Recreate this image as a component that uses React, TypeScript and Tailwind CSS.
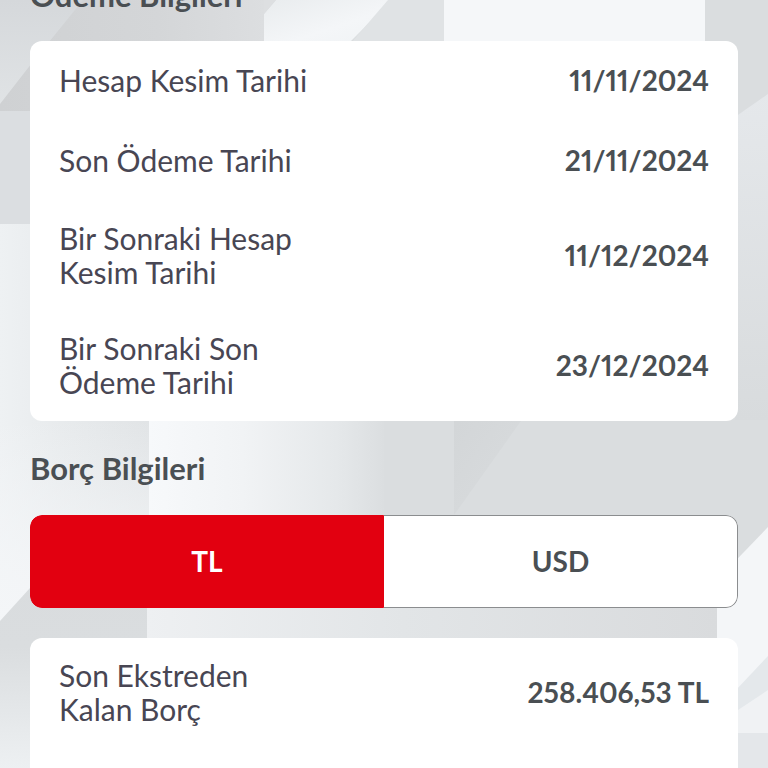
import { useState } from "react";
import clsx from "clsx";

type Row = { label: string; value: string };

const paymentRows: Row[] = [
  { label: "Hesap Kesim Tarihi", value: "11/11/2024" },
  { label: "Son Ödeme Tarihi", value: "21/11/2024" },
  { label: "Bir Sonraki Hesap Kesim Tarihi", value: "11/12/2024" },
  { label: "Bir Sonraki Son Ödeme Tarihi", value: "23/12/2024" },
];

const debtRows: Record<string, Row[]> = {
  TL: [{ label: "Son Ekstreden Kalan Borç", value: "258.406,53 TL" }],
  USD: [{ label: "Son Ekstreden Kalan Borç", value: "0,00 USD" }],
};

function Backdrop() {
  return (
    <svg
      aria-hidden="true"
      viewBox="0 0 768 768"
      preserveAspectRatio="none"
      className="absolute inset-0 -z-10 h-full w-full"
    >
      <defs>
        <linearGradient id="shade" x1="0" x2="1" y1="0" y2="0">
          <stop offset="0" stopColor="#cfd1d3" />
          <stop offset="0.6" stopColor="#d4d6d8" />
          <stop offset="1" stopColor="#dcdee0" />
        </linearGradient>
        <linearGradient id="corner" x1="0" x2="0" y1="0" y2="1">
          <stop offset="0" stopColor="#d5d8db" />
          <stop offset="1" stopColor="#e0e3e5" />
        </linearGradient>
        <linearGradient id="glow" x1="0" x2="1" y1="0" y2="1">
          <stop offset="0" stopColor="#e9ecee" />
          <stop offset="0.6" stopColor="#f4f6f8" />
          <stop offset="1" stopColor="#f0f3f5" />
        </linearGradient>
        <linearGradient id="left" x1="0" x2="1" y1="0" y2="0">
          <stop offset="0" stopColor="#eef1f3" />
          <stop offset="0.4" stopColor="#e8ebed" />
          <stop offset="1" stopColor="#e1e4e6" />
        </linearGradient>
        <linearGradient id="mist" x1="0" x2="0" y1="0" y2="1">
          <stop offset="0" stopColor="#f4f6f8" stopOpacity="0" />
          <stop offset="0.7" stopColor="#f4f6f8" stopOpacity="0.8" />
          <stop offset="1" stopColor="#f4f6f8" />
        </linearGradient>
        <linearGradient id="middle" x1="0" x2="1" y1="0" y2="0">
          <stop offset="0" stopColor="#f7f9fb" />
          <stop offset="0.4" stopColor="#f1f3f5" />
          <stop offset="0.8" stopColor="#e5e8ea" />
          <stop offset="1" stopColor="#dbdee0" />
        </linearGradient>
        <linearGradient id="band" x1="0" x2="1" y1="0" y2="0">
          <stop offset="0" stopColor="#eef0f2" />
          <stop offset="0.45" stopColor="#e2e5e7" />
          <stop offset="1" stopColor="#d9dbdd" />
        </linearGradient>
        <linearGradient id="bottom" x1="0" x2="0" y1="0" y2="1">
          <stop offset="0" stopColor="#d9dcde" />
          <stop offset="0.4" stopColor="#dadddf" />
          <stop offset="1" stopColor="#edf0f2" />
        </linearGradient>
        <linearGradient id="fold" x1="0" x2="1" y1="0" y2="1">
          <stop offset="0" stopColor="#d2d5d7" />
          <stop offset="1" stopColor="#dadddf" />
        </linearGradient>
        <linearGradient id="side" x1="0" x2="0" y1="0" y2="1">
          <stop offset="0" stopColor="#e5e8eb" />
          <stop offset="1" stopColor="#d8dbdd" />
        </linearGradient>
      </defs>
      <path fill="#dadddf" d="M0 0H768V768H0Z" />
      <path fill="url(#shade)" d="M0 0H264V111H0Z" />
      <path fill="url(#corner)" d="M0 0H83L28 68L0 104Z" />
      <path fill="#dbdee1" d="M0 111H40V224H0Z" />
      <path fill="url(#glow)" d="M264 14L276 0H392L350 42H264Z" />
      <path fill="#dddfe1" d="M276 0H264V14Z" />
      <path fill="#e0e3e5" d="M388 0H444V50H345Z" />
      <path fill="#f5f7f9" d="M444 0H705V50H444Z" />
      <path fill="url(#side)" d="M768 94V420H735V117Z" />
      <path fill="url(#left)" d="M0 224H150V690H0Z" />
      <path fill="url(#mist)" d="M0 420H149V622H0Z" />
      <path fill="url(#bottom)" d="M0 621L50 566H147V768H0Z" />
      <path fill="url(#middle)" d="M149 400H384V530H149Z" />
      <path fill="url(#fold)" d="M454 400H536L454 515Z" />
      <path fill="url(#band)" d="M147 590H717V650H147Z" />
      <path fill="#f4f6f8" d="M768 527V768H717V580Z" />
      <path fill="#e4e8eb" d="M768 656V710L735 722V691Z" />
      <path fill="#f0f2f4" d="M735 712L768 690V733H735Z" />
      <path fill="#e4e7ea" d="M735 733H768V768H735Z" />
    </svg>
  );
}

function InfoCard({ rows, className }: { rows: Row[]; className?: string }) {
  return (
    <dl className={clsx("bg-white", className)}>
      {rows.map((row) => (
        <div
          key={row.label}
          className="flex min-h-20 items-center justify-between gap-6 px-[29px] pt-5 pb-[22px]"
        >
          <dt className="max-w-64 text-[#484653]">{row.label}</dt>
          <dd className="shrink-0 text-[28px] font-bold text-[#4a4f53] proportional-nums">
            {row.value}
          </dd>
        </div>
      ))}
    </dl>
  );
}

export default function App() {
  const [currency, setCurrency] = useState("TL");

  return (
    <main className="relative isolate flex min-h-screen flex-col overflow-hidden px-[30px] font-['Lato',sans-serif] text-[30px] leading-[34px]">
      <Backdrop />

      <h2 className="-mt-[22px] text-[31px] font-bold text-[#4a4f53]">Ödeme Bilgileri</h2>
      <InfoCard rows={paymentRows} className="mt-[29px] rounded-xl" />

      <h2 className="mt-[30px] text-[31px] font-bold text-[#4a4f53]">Borç Bilgileri</h2>
      <div className="mt-[30px] grid grid-cols-2 overflow-hidden rounded-xl">
        {["TL", "USD"].map((code) => (
          <button
            key={code}
            type="button"
            aria-pressed={currency === code}
            onClick={() => setCurrency(code)}
            className={clsx(
              "h-[93px] border pb-0.5 text-[28px] font-bold first:rounded-l-xl last:rounded-r-xl",
              currency === code
                ? "border-[#e20010] bg-[#e20010] text-white"
                : "border-[#8b8d8f] bg-white text-[#4a4f53] last:border-l-0",
            )}
          >
            {code}
          </button>
        ))}
      </div>

      <InfoCard rows={debtRows[currency]} className="mt-[30px] grow rounded-t-xl" />
    </main>
  );
}
